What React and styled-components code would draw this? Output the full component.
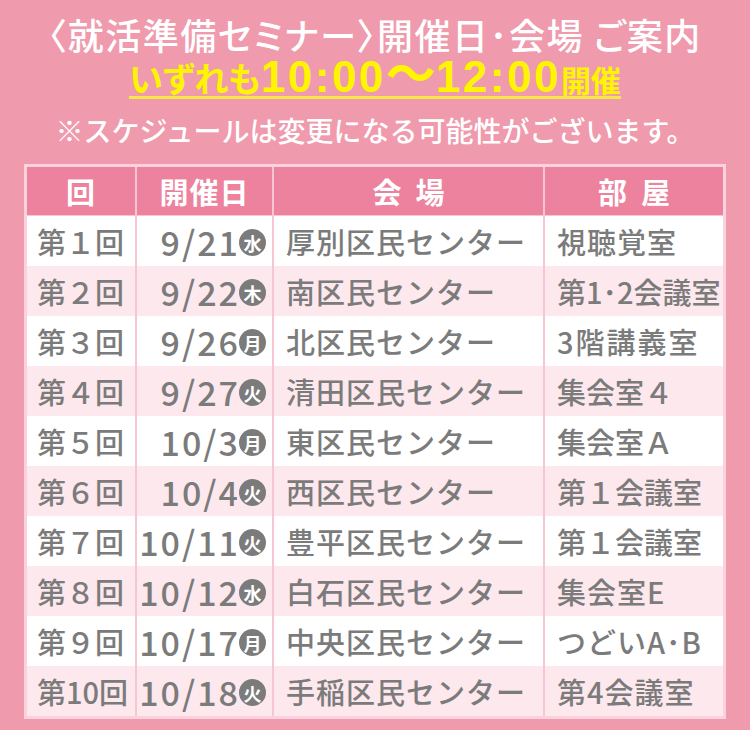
import styled, { createGlobalStyle } from "styled-components";

const GlobalStyle = createGlobalStyle`
  html, body {
    margin: 0;
    padding: 0;
    background: #ef9aad;
  }
  body {
    font-family: "Noto Sans CJK JP", "Noto Sans", sans-serif;
  }
`

const Page = styled('div')`
  width: 750px;
  height: 730px;
  background-color: #ef9aad;
  display: flex;
  flex-direction: column;
  align-items: center;
  box-sizing: border-box;
  padding-top: 12px;
  overflow: hidden;
`

const Title = styled('div')`
  color: #fff;
  font-size: 36px;
  font-weight: 500;
  line-height: 44px;
  height: 44px;
  font-feature-settings: "palt";
  letter-spacing: 1.5px;
  white-space: nowrap;
`

const Highlight = styled('div')`
  color: #fff500;
  font-family: "Liberation Sans", "Noto Sans", sans-serif;
  font-weight: 700;
  display: flex;
  align-items: baseline;
  height: 37px;
  margin-top: 3px;
  border-bottom: 3px solid #f7e64a;
  white-space: nowrap;
`

const Small = styled('span')`
  font-family: "Noto Sans CJK JP", sans-serif;
  font-size: ${p => p.$size || 34}px;
  font-feature-settings: "palt";
  line-height: 0.4;
`

const Big = styled('span')`
  font-size: 44px;
  letter-spacing: 2.5px;
  line-height: 0.8;
`

const Wave = styled('span')`
  font-family: "Noto Sans CJK JP", sans-serif;
  font-size: 50px;
  line-height: 0.4;
`

const Note = styled('div')`
  color: #fff;
  font-size: 28px;
  font-weight: 500;
  line-height: 36px;
  margin-top: 13px;
  white-space: nowrap;
`

const Table = styled('div')`
  margin-top: 16px;
  width: 702px;
  box-sizing: border-box;
  border: 3px solid #fad2de;
  background: #f7c6d4;
  display: grid;
  grid-template-columns: 108px 135px 269px 178px;
  grid-auto-rows: 50px;
  grid-template-rows: 49px;
  column-gap: 2px;
`

const HeadCell = styled('div')`
  background: #ec829d;
  color: #fff;
  font-size: 29px;
  font-weight: 700;
  display: flex;
  align-items: center;
  justify-content: center;
  letter-spacing: ${p => p.$spaced ? '14px' : '1px'};
  padding-left: ${p => p.$spaced ? '14px' : '0'};
  border-bottom: 1px solid #f7c6d4;
`

const Cell = styled('div')`
  background: ${p => p.$alt ? '#fde8ee' : '#ffffff'};
  color: #7b7b7b;
  font-size: 29px;
  font-weight: 500;
  display: flex;
  align-items: center;
  justify-content: ${p => p.$right ? 'flex-end' : 'flex-start'};
  padding: ${p => p.$right ? '0 6px 0 0' : `0 0 0 ${p.$pad || 12}px`};
  letter-spacing: ${p => p.$spacing ?? 1}px;
  white-space: nowrap;
`

const DateText = styled('span')`
  font-size: 34px;
  letter-spacing: 2px;
`

const Badge = styled('span')`
  width: 27px;
  height: 27px;
  border-radius: 50%;
  background: #7b7b7b;
  color: #fff;
  font-size: 18px;
  font-weight: 700;
  display: inline-flex;
  align-items: center;
  justify-content: center;
  margin-left: -1px;
  margin-top: 3px;
  letter-spacing: 0;
`

const rows = [
  ['第１回', '9/21', '水', '厚別区民センター', '視聴覚室', 1],
  ['第２回', '9/22', '木', '南区民センター', '第1･2会議室', 0],
  ['第３回', '9/26', '月', '北区民センター', '3階講義室', 2],
  ['第４回', '9/27', '火', '清田区民センター', '集会室４', 0],
  ['第５回', '10/3', '月', '東区民センター', '集会室Ａ', 0],
  ['第６回', '10/4', '火', '西区民センター', '第１会議室', 0],
  ['第７回', '10/11', '火', '豊平区民センター', '第１会議室', 0],
  ['第８回', '10/12', '水', '白石区民センター', '集会室E', 1],
  ['第９回', '10/17', '月', '中央区民センター', 'つどいA･B', 1],
  ['第10回', '10/18', '火', '手稲区民センター', '第4会議室', 1],
]

export default function App() {
  return (
    <Page>
      <GlobalStyle />
      <Title>〈就活準備セミナー〉開催日･会場 ご案内</Title>
      <Highlight>
        <Small>いずれも</Small>
        <Big>10:00</Big>
        <Wave>〜</Wave>
        <Big>12:00</Big>
        <Small $size={30}>開催</Small>
      </Highlight>
      <Note>※スケジュールは変更になる可能性がございます。</Note>
      <Table>
        <HeadCell>回</HeadCell>
        <HeadCell>開催日</HeadCell>
        <HeadCell $spaced>会場</HeadCell>
        <HeadCell $spaced>部屋</HeadCell>
        {rows.map((r, i) => {
          const alt = i % 2 === 1
          return [
            <Cell key={`a${i}`} $alt={alt} $pad={10} $spacing={0}>{r[0]}</Cell>,
            <Cell key={`b${i}`} $alt={alt} $right>
              <DateText>{r[1]}</DateText>
              <Badge>{r[2]}</Badge>
            </Cell>,
            <Cell key={`c${i}`} $alt={alt}>{r[3]}</Cell>,
            <Cell key={`d${i}`} $alt={alt} $spacing={r[5]}>{r[4]}</Cell>,
          ]
        })}
      </Table>
    </Page>
  )
}
